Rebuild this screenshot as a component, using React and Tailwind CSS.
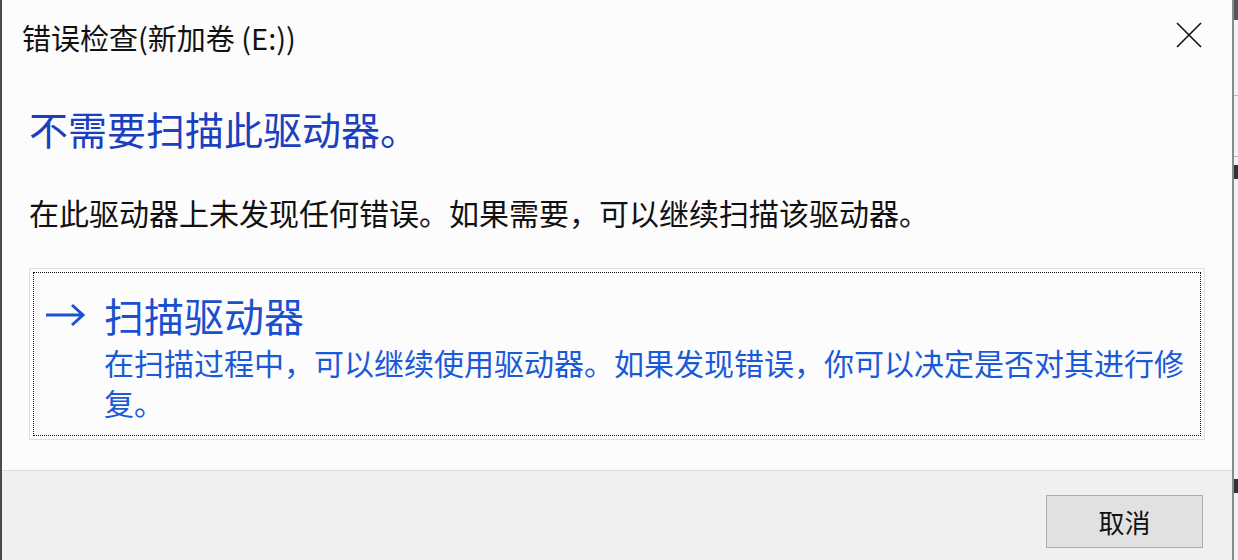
export default function App() {
  const font = { fontFamily: '"Noto Sans CJK SC", "Liberation Sans", sans-serif' }

  return (
    <div className="w-[1238px] h-[560px] flex overflow-hidden bg-[#e9e9e9]" style={font}>
      {/* left window edge */}
      <div className="w-[2px] bg-[#4a4a4a]" />

      {/* dialog */}
      <div className="w-[1230px] flex flex-col bg-[#fcfcfd]">
        {/* title bar */}
        <div className="h-[78px] flex items-start justify-between pl-[20px] pr-[30px] pt-[17px]">
          <span className="text-[29px] leading-[40px] text-[#111]">错误检查(新加卷 (E:))</span>
          <svg width="26" height="26" viewBox="0 0 26 26" className="mt-[5px]">
            <path d="M1 1 L25 25 M25 1 L1 25" stroke="#111" strokeWidth="1.6" fill="none" />
          </svg>
        </div>

        {/* content */}
        <div className="flex-1 flex flex-col px-[27px]">
          <h1 className="mt-[26px] text-[39px] leading-[48px] text-[#1b3fbe] font-normal">不需要扫描此驱动器。</h1>
          <p className="mt-[40px] text-[30px] leading-[40px] text-[#111]">
            在此驱动器上未发现任何错误。如果需要，可以继续扫描该驱动器。
          </p>

          {/* command link */}
          <div className="mt-[36px] border border-[#d9e1e8] p-[3px]">
            <div className="border border-dotted border-[#111] flex pl-[10px] pr-[12px] pt-[18px] pb-[13px]">
              <div className="w-[60px] h-[48px] flex items-center shrink-0">
                <svg width="42" height="24" viewBox="0 0 42 24">
                  <path d="M2 12 H39 M28 2 L39 12 L28 22" stroke="#1a52d6" strokeWidth="3" fill="none" />
                </svg>
              </div>
              <div className="flex flex-col">
                <span className="text-[40px] leading-[48px] text-[#1a4fd0]">扫描驱动器</span>
                <span className="mt-[3px] text-[30px] leading-[40px] text-[#1a5ad8]">
                  在扫描过程中，可以继续使用驱动器。如果发现错误，你可以决定是否对其进行修复。
                </span>
              </div>
            </div>
          </div>
        </div>

        {/* footer */}
        <div className="h-[90px] bg-[#f0f0f0] border-t border-[#dcdcdc] flex justify-end items-start pt-[24px] pr-[29px]">
          <button className="w-[157px] h-[53px] bg-[#e1e1e1] border border-[#adadad] text-[26px] text-[#111]">
            取消
          </button>
        </div>
      </div>

      {/* right window edge and background window */}
      <div className="w-[2px] bg-[#8a8a8a]" />
      <div className="flex-1 flex flex-col bg-[#f2f2f2]">
        <div className="h-[20px] bg-[#555]" />
        <div className="mt-[75px] h-[1px] bg-[#bbb]" />
        <div className="mt-[60px] h-[1px] bg-[#bbb]" />
        <div className="mt-[8px] h-[14px] bg-[#333]" />
        <div className="mt-[300px] h-[14px] bg-[#333]" />
      </div>
    </div>
  )
}
